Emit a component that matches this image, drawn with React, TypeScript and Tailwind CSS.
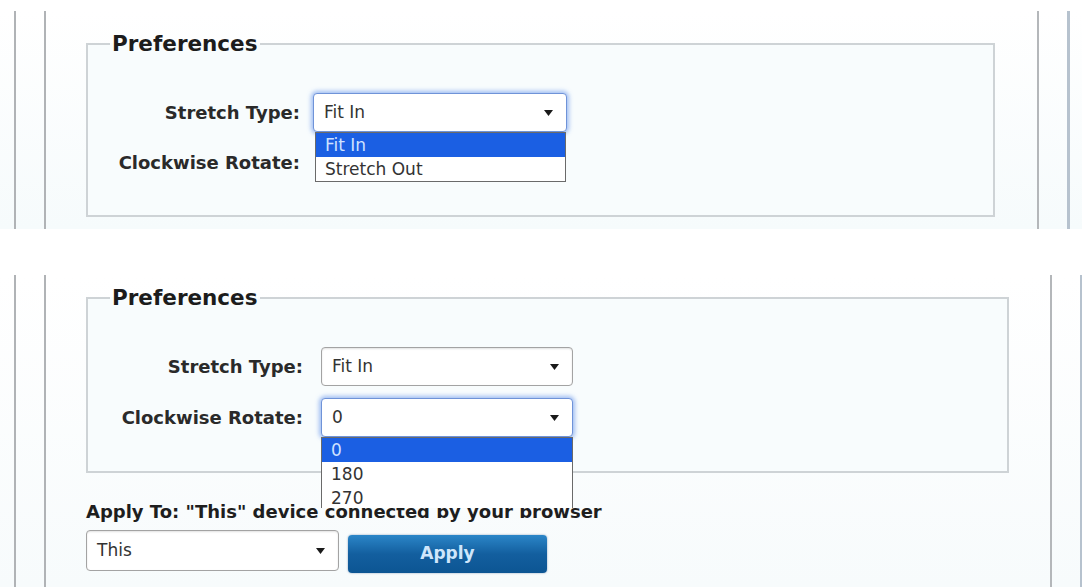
import type { ReactNode } from 'react';

const FONT = { fontFamily: '"DejaVu Sans", Verdana, sans-serif' };

function Arrow() {
  return (
    <svg width="9" height="6" viewBox="0 0 9 6" className="shrink-0">
      <polygon points="0,0 9,0 4.5,6" fill="#1a1a1a" />
    </svg>
  );
}

function Select({ value, focused, className }: { value: string; focused?: boolean; className: string }) {
  return (
    <div
      className={`flex items-center justify-between bg-white rounded-[4px] pl-[10px] pr-[13px] text-[17px] text-[#333] ${
        focused
          ? 'border border-[#6f93d8] shadow-[0_0_4px_2px_rgba(90,140,235,0.55)]'
          : 'border border-[#a3a3a3] shadow-[inset_0_1px_2px_rgba(0,0,0,0.12)]'
      } ${className}`}
    >
      <span>{value}</span>
      <Arrow />
    </div>
  );
}

function DropList({ options, className }: { options: string[]; className: string }) {
  return (
    <div className={`absolute z-10 bg-white border border-[#6a6a6a] overflow-hidden text-[17px] text-[#333] ${className}`}>
      {options.map((o, i) => (
        <div
          key={o}
          className={`h-[24px] leading-[24px] pl-[9px] ${i === 0 ? 'bg-[#1b5fe3] text-[#cfe2ff]' : ''}`}
        >
          {o}
        </div>
      ))}
    </div>
  );
}

function Legend() {
  return (
    <legend className="ml-[22px] px-[2px] text-[21.5px] leading-[26px] font-bold text-[#1c1c1c]">Preferences</legend>
  );
}

function Label({ children }: { children: ReactNode }) {
  return <div className="text-right text-[18px] font-bold text-[#2a2a2a]">{children}</div>;
}

export default function App() {
  return (
    <div className="w-[1082px] h-[587px] overflow-hidden bg-white" style={FONT}>
      {/* top capture: stretch type list open */}
      <div className="mt-[11px] h-[218px] flex bg-gradient-to-b from-white to-[#f6fbfc]">
        <div className="ml-[14px] w-[2px] bg-[#b0b3b6]" />
        <div className="ml-[28px] w-[2px] bg-[#b0b3b6]" />
        <div className="w-[991px] pl-[40px]">
          <fieldset className="mt-[20px] w-[909px] border-2 border-[#ced3d6] pt-[36px] pb-[33px] bg-[#f8fcfd]">
            <Legend />
            <div className="grid grid-cols-[212px_254px] gap-x-[13px] gap-y-[11px] items-center">
              <Label>Stretch Type:</Label>
              <div className="relative">
                <Select value="Fit In" focused className="h-[39px]" />
                <DropList options={['Fit In', 'Stretch Out']} className="top-[39px] left-[2px] w-[251px] h-[50px]" />
              </div>
              <Label>Clockwise Rotate:</Label>
              {/* rotate select sits under the open list */}
              <div className="h-[39px]" />
            </div>
          </fieldset>
        </div>
        <div className="w-[2px] bg-[#b4b7ba]" />
        <div className="ml-[28px] w-[3px] bg-[#b6c2ce]" />
      </div>

      {/* bottom capture: rotate list open */}
      <div className="mt-[46px] h-[312px] flex bg-gradient-to-b from-white to-[#f7fbfc]">
        <div className="ml-[14px] w-[2px] bg-[#b0b3b6]" />
        <div className="ml-[28px] w-[2px] bg-[#b0b3b6]" />
        <div className="w-[1004px] pl-[40px]">
          <fieldset className="mt-[10px] w-[923px] border-2 border-[#ced3d6] pt-[36px] pb-[34px] bg-[#f8fcfd]">
            <Legend />
            <div className="grid grid-cols-[215px_252px] gap-x-[18px] gap-y-[12px] items-center">
              <Label>Stretch Type:</Label>
              <Select value="Fit In" className="h-[39px]" />
              <Label>Clockwise Rotate:</Label>
              <div className="relative">
                <Select value="0" focused className="h-[39px]" />
                <DropList options={['0', '180', '270']} className="top-[39px] left-0 w-[252px] h-[71px] border-b-0" />
              </div>
            </div>
          </fieldset>
          <div className="mt-[28px] text-[18px] leading-[22px] font-bold text-[#1e1e1e]">
            Apply To: "This" device connected by your browser
          </div>
          <div className="mt-[7px] flex items-start gap-[9px]">
            <Select value="This" className="w-[253px] h-[41px]" />
            <button className="mt-[5px] w-[199px] h-[38px] rounded-[4px] bg-gradient-to-b from-[#2b86c8] via-[#135f9f] to-[#0c5593] text-[17px] font-bold text-[#cfe6fb] shadow-[0_0_2px_rgba(0,60,120,0.5)]">
              Apply
            </button>
          </div>
        </div>
        <div className="w-[2px] bg-[#b4b7ba]" />
        <div className="ml-[28px] w-[2px] bg-[#b6c2ce]" />
      </div>
    </div>
  );
}
